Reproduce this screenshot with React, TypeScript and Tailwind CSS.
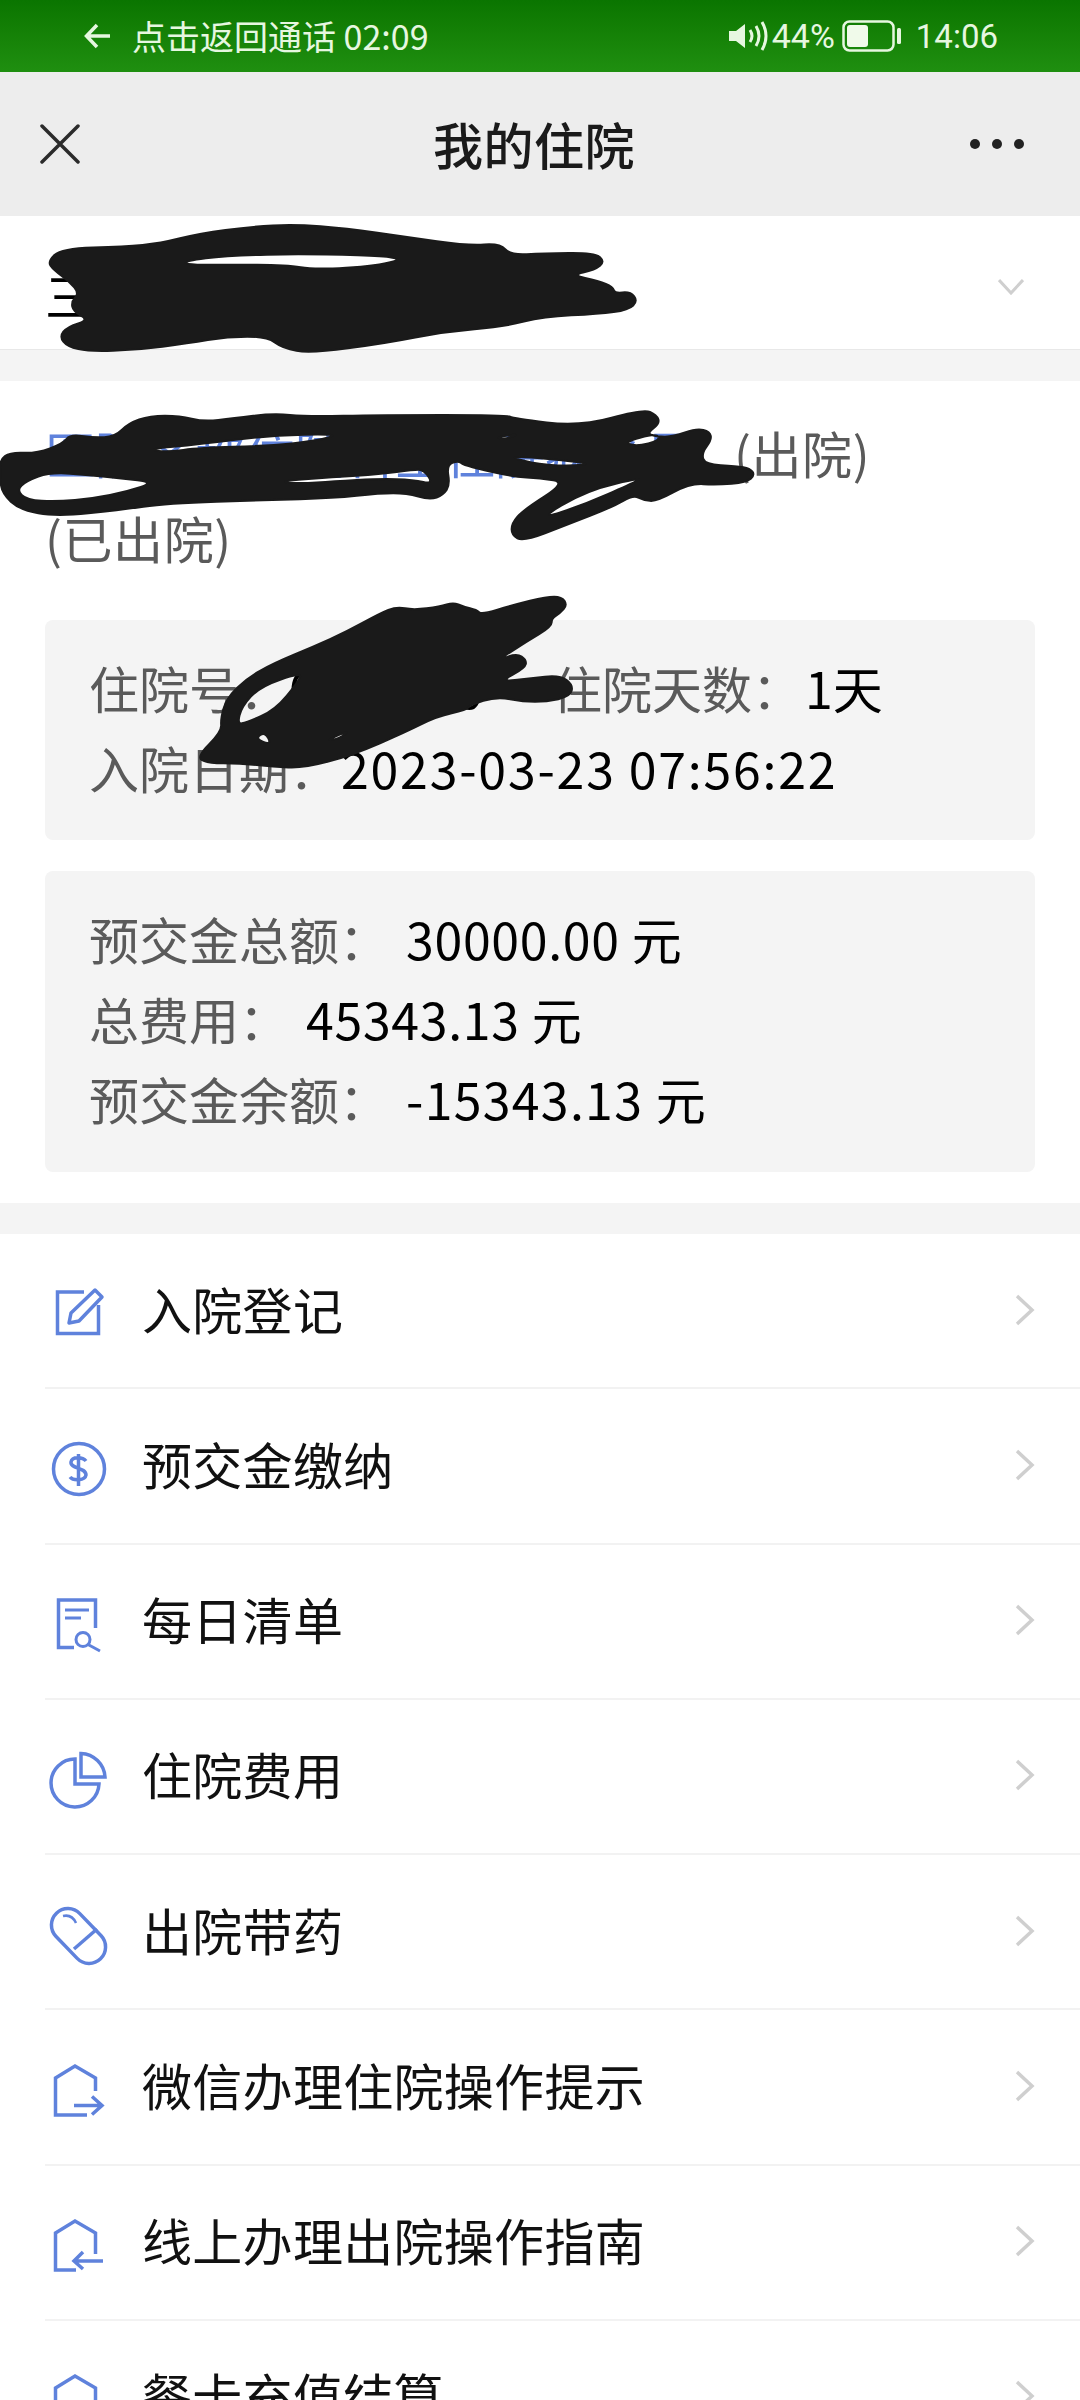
const stack = "font-['Noto_Sans_CJK_SC','Noto_Sans',sans-serif]";

// rounded closed outline through a list of x,y pairs
function blob(pts: number[][]) {
  const mid = (a: number[], b: number[]) => `${(a[0] + b[0]) / 2} ${(a[1] + b[1]) / 2}`;
  let d = `M${mid(pts[pts.length - 1], pts[0])}`;
  pts.forEach((p, i) => {
    d += ` Q${p[0]} ${p[1]} ${mid(p, pts[(i + 1) % pts.length])}`;
  });
  return d + " Z";
}

const scribbleOne = [
  blob([[45,140],[80,100],[240,95],[330,85],[430,55],[560,35],[670,28],[800,40],[950,65],[1110,92],[1190,85],[1215,120],[1300,115],[1430,113],[1455,140],[1430,165],[1370,180],[1440,198],[1475,215],[1480,235],[1520,230],[1538,258],[1515,285],[1440,297],[1300,305],[1200,335],[1050,350],[900,385],[710,415],[640,400],[600,365],[500,365],[400,385],[270,405],[150,410],[95,395],[75,365],[95,335],[150,315],[110,290],[105,260],[125,235],[100,200],[60,165]]),
  blob([[390,138],[500,122],[700,116],[960,126],[880,152],[720,164],[650,149],[500,149],[400,150]]),
].join(" ");

const scribbleTwo = [
  blob([[0,195],[30,172],[110,175],[190,145],[210,118],[280,128],[345,125],[385,85],[450,62],[540,62],[610,80],[700,70],[820,55],[920,65],[1140,60],[1520,60],[1540,70],[1740,95],[1930,42],[1970,60],[1980,85],[1940,115],[1970,125],[2020,125],[2090,100],[2130,110],[2135,135],[2105,175],[2115,208],[2210,213],[2250,220],[2265,240],[2240,262],[2150,270],[2070,265],[1970,320],[1930,315],[1900,300],[1840,335],[1700,390],[1570,440],[1535,420],[1535,385],[1570,345],[1700,262],[1620,250],[1540,245],[1450,225],[1390,210],[1375,197],[1340,210],[1350,270],[1330,300],[1290,315],[1220,295],[1140,295],[1000,310],[800,315],[500,325],[360,345],[170,365],[60,345],[5,295],[0,240]]),
  blob([[50,285],[80,258],[150,232],[270,240],[360,250],[465,262],[380,290],[280,310],[170,320],[80,315]]),
  blob([[440,162],[600,148],[800,122],[1025,116],[950,138],[800,153],[600,158],[500,172]]),
  blob([[830,260],[1000,246],[1140,238],[1240,224],[1272,224],[1300,268],[1240,254],[1140,251],[1000,259],[900,266]]),
  blob([[1485,127],[1560,116],[1515,133]]),
  blob([[1515,180],[1790,205],[1700,214],[1590,204]]),
  blob([[1870,142],[1970,114],[1980,137],[1910,154]]),
  blob([[1610,376],[1760,286],[1935,246],[1890,268],[1760,326]]),
].join(" ");

const scribbleThree = [
  blob([[50,515],[125,440],[122,400],[140,340],[200,280],[280,235],[400,185],[500,140],[600,85],[650,65],[700,75],[780,65],[820,52],[850,65],[890,75],[905,88],[1000,60],[1100,35],[1145,35],[1162,60],[1140,85],[1115,100],[1115,125],[1040,170],[950,228],[1010,205],[1040,225],[1035,250],[960,290],[1050,280],[1140,270],[1180,300],[1170,335],[1100,350],[1030,350],[950,335],[870,360],[860,375],[770,395],[680,440],[520,510],[370,550],[280,545],[180,535],[80,535]]),
  blob([[172,418],[185,365],[240,305],[365,262],[355,290],[285,375],[200,412]]),
  blob([[225,462],[255,440],[275,480]]),
  blob([[435,468],[510,435],[480,460]]),
].join(" ");

function Scribbles() {
  return (
    <svg className="absolute left-0 top-0 w-[1080px] h-[2400px] pointer-events-none" viewBox="0 0 1080 2400" fill="#1a1a1a" fillRule="evenodd" stroke="#1a1a1a" strokeWidth="6" strokeLinejoin="round">
      <path transform="translate(30 215) scale(0.395 0.3333)" d={scribbleOne} />
      <path transform="translate(0 395) scale(0.3333)" d={scribbleTwo} />
      <path transform="translate(180 585) scale(0.3333)" d={scribbleThree} />
    </svg>
  );
}

function RowIcon({ children }: { children: React.ReactNode }) {
  return (
    <svg className="w-[60px] h-[60px] shrink-0 overflow-visible" viewBox="0 0 60 60" fill="none" stroke="#5f82dc" strokeWidth="3.5">
      {children}
    </svg>
  );
}

const rows = [
  {
    label: "入院登记",
    icon: (
      <>
        <path d="M36 11H9.5V52.5H50.5V24" />
        <path d="M21 42L23 32L47 9L54 16L31 40Z" strokeLinejoin="round" />
      </>
    ),
  },
  {
    label: "预交金缴纳",
    icon: (
      <>
        <ellipse cx="31" cy="33" rx="25.5" ry="25.5" />
        <path d="M38 25C35 21 24 20 23 26C22 33 38 31 38 39C37 45 25 45 22 41M30.5 18V50" />
      </>
    ),
  },
  {
    label: "每日清单",
    icon: (
      <>
        <path d="M47.5 37V9H10.5V56.5H26" />
        <path d="M17 19H41M17 27H33" strokeWidth="3" />
        <circle cx="35" cy="48.5" r="7" strokeWidth="3" />
        <path d="M40 53.5L52 60" strokeWidth="3" />
      </>
    ),
  },
  {
    label: "住院费用",
    icon: (
      <>
        <path d="M27 13A24 24 0 1 0 51 38H27Z" />
        <path d="M33 7.5V31H57A25 25 0 0 0 33 7.5Z" />
      </>
    ),
  },
  {
    label: "出院带药",
    icon: (
      <>
        <rect x="-1.2" y="17.5" width="63.4" height="33" rx="16.5" transform="rotate(46 30.5 34)" />
        <path d="M26 47L49 27" />
        <path d="M15 14Q24 12 28 21" strokeWidth="2.5" />
      </>
    ),
  },
  {
    label: "微信办理住院操作提示",
    icon: (
      <>
        <path d="M47.5 34V21L27 9L7.5 21V58H39" />
        <path d="M26 48.5H53M44 39.5L54 48.5L44 57.5" />
      </>
    ),
  },
  {
    label: "线上办理出院操作指南",
    icon: (
      <>
        <path d="M47.5 42V21L27 9L7.5 21V58H28" />
        <path d="M55 49H27M35 40L26 49L35 57" />
      </>
    ),
  },
  {
    label: "餐卡充值结算",
    icon: (
      <>
        <path d="M47.5 34V21L27 9L7.5 21V58H39" />
        <path d="M26 48.5H53M44 39.5L54 48.5L44 57.5" />
      </>
    ),
  },
];

function MenuRow({ label, icon }: { label: string; icon: React.ReactNode }) {
  return (
    <div className="ml-[45px] h-[155.25px] shrink-0 flex items-center border-b-2 border-[#f2f2f2]">
      <div className="ml-[3px] mr-[34px] flex">
        <RowIcon>{icon}</RowIcon>
      </div>
      <span className="pb-[6px] text-[50px] leading-none tracking-[0.3px] text-[#111]">{label}</span>
      <svg className="ml-auto mr-[45px] mb-[2px] w-[20px] h-[34px]" viewBox="0 0 20 34" fill="none" stroke="#cfcfcf" strokeWidth="3.5">
        <path d="M2 3L17 17L2 31" />
      </svg>
    </div>
  );
}

export default function App() {
  return (
    <div className={`relative w-[1080px] h-[2400px] overflow-hidden bg-white ${stack}`}>
      {/* status bar */}
      <div className="h-[72px] flex items-center pl-[84px] pr-[82px] bg-gradient-to-b from-[#0a7500] to-[#1f8f10] text-[#e6f7e0] text-[34px] leading-none">
        <svg className="w-[26px] h-[26px] mr-[22px]" viewBox="0 0 26 26" fill="none" stroke="currentColor" strokeWidth="3.5">
          <path d="M13 2L2.5 13L13 24M3 13H26" />
        </svg>
        <span>点击返回通话 02:09</span>
        <div className="ml-auto flex items-center">
          <svg className="w-[42px] h-[30px] mr-[2px]" viewBox="0 0 42 30" fill="currentColor">
            <path d="M1 10H8L17 3V27L8 20H1Z" />
            <path d="M22 9Q26 15 22 21M28 5Q34 15 28 25M34 1Q42 15 34 29" fill="none" stroke="currentColor" strokeWidth="3" />
          </svg>
          <span className="font-['Roboto'] text-[34px]">44%</span>
          <svg className="w-[60px] h-[32px] ml-[7px]" viewBox="0 0 60 32" fill="none">
            <rect x="1.5" y="1.5" width="50" height="29" rx="6" stroke="currentColor" strokeWidth="2.5" />
            <rect x="5" y="5" width="21" height="22" rx="3" fill="#f0faea" />
            <rect x="55" y="8" width="4" height="16" rx="1.5" fill="currentColor" />
          </svg>
          <span className="ml-[14px] font-['Roboto'] text-[33px]">14:06</span>
        </div>
      </div>

      {/* nav */}
      <div className="relative h-[144px] flex items-center justify-center bg-[#ededed]">
        <svg className="absolute left-[40px] top-[52px] w-[40px] h-[40px]" viewBox="0 0 40 40" stroke="#2b2b2b" strokeWidth="3.5" strokeLinecap="round">
          <path d="M2 2L38 38M38 2L2 38" />
        </svg>
        <h1 className="mr-[12px] mb-[2px] text-[50px] leading-none font-medium tracking-[0.5px] text-[#1a1a1a]">我的住院</h1>
        <div className="absolute left-[970px] top-[67px] flex gap-[12px]">
          <div className="w-[10px] h-[10px] rounded-full bg-[#222]" />
          <div className="w-[10px] h-[10px] rounded-full bg-[#222]" />
          <div className="w-[10px] h-[10px] rounded-full bg-[#222]" />
        </div>
      </div>

      {/* hospital picker */}
      <div className="h-[134px] flex items-center pl-[45px] pr-[56px] bg-white border-b border-[#e8e8e8]">
        <span className="pt-[22px] text-[50px] leading-none text-black">三</span>
        <svg className="ml-auto mt-[8px] w-[26px] h-[16px]" viewBox="0 0 26 16" fill="none" stroke="#cfcfcf" strokeWidth="3">
          <path d="M1 1L13 14L25 1" />
        </svg>
      </div>
      <div className="h-[31px] bg-[#f4f4f4]" />

      {/* admission info */}
      <div className="px-[45px] pt-[29px] pb-[31px]">
        <div className="text-[50px] leading-[85px] text-[#5a5a5a]">
          <span className="inline-block w-[689px] text-[#5f82dc] whitespace-nowrap">医院名称住院科室住院病区号</span>
          <span className="tracking-[0.6px]">(出院)</span>
          <br />
          <span className="tracking-[0.6px]">(已出院)</span>
        </div>
        <div className="mt-[40px] h-[220px] rounded-lg bg-[#f4f4f4] pl-[44px] pt-[27px] text-[50px] leading-[80px] text-[#5a5a5a] whitespace-nowrap">
          <div className="flex">
            <span>住院号：</span>
            <span className="w-[263px] text-black">0000000</span>
            <span>住院天数：</span>
            <span className="ml-[3px] text-black">1天</span>
          </div>
          <div className="flex">
            <span>入院日期：</span>
            <span className="ml-[2px] tracking-[1.8px] text-black">2023-03-23 07:56:22</span>
          </div>
        </div>
        <div className="mt-[31px] h-[301px] rounded-lg bg-[#f4f4f4] pl-[44px] pt-[27px] text-[50px] leading-[80px] text-[#5a5a5a] whitespace-nowrap">
          <div className="flex">
            <span>预交金总额：</span>
            <span className="ml-[17px] tracking-[0.7px] text-black">30000.00 元</span>
          </div>
          <div className="flex">
            <span>总费用：</span>
            <span className="ml-[17px] tracking-[0.7px] text-black">45343.13 元</span>
          </div>
          <div className="flex">
            <span>预交金余额：</span>
            <span className="ml-[17px] tracking-[1.3px] text-black">-15343.13 元</span>
          </div>
        </div>
      </div>
      <div className="h-[31px] bg-[#f4f4f4]" />

      {/* menu */}
      <div className="flex flex-col">
        {rows.map((row) => (
          <MenuRow key={row.label} label={row.label} icon={row.icon} />
        ))}
      </div>

      <Scribbles />
    </div>
  );
}
